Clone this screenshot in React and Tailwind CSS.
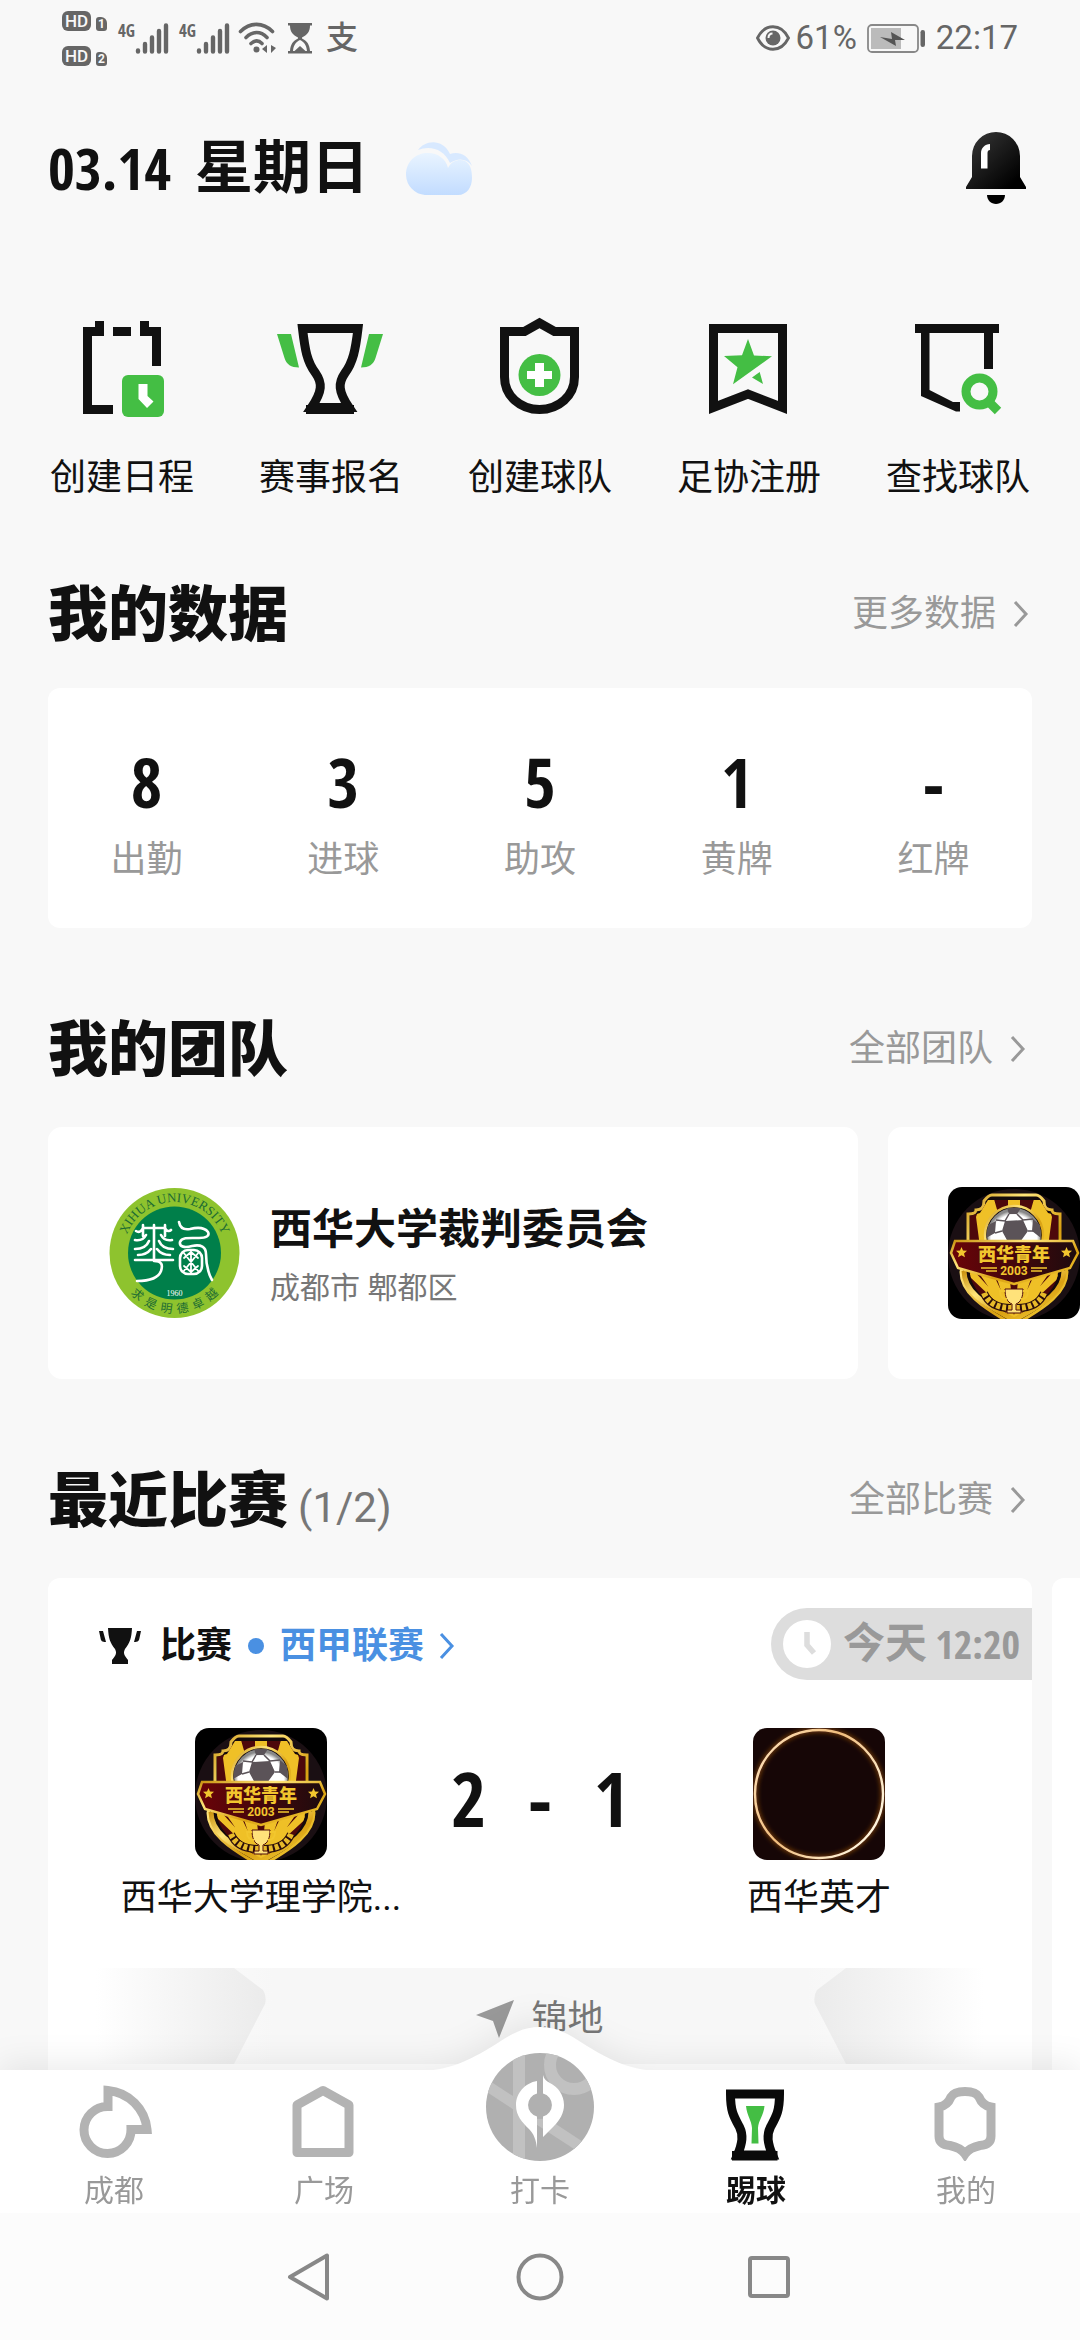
import React from "react";
import { useState } from "react";

const Chevron = ({ className }) => (
  <svg viewBox="0 0 16 28" className={className} fill="none" stroke="currentColor" strokeWidth="3">
    <path d="M2 2l11 12L2 26" />
  </svg>
);

const Signal = () => (
  <span className="flex h-[31px]">
    <span className="w-[17px] text-[17px] leading-4 font-bold num">4G</span>
    <svg viewBox="0 0 34 31" className="h-[31px] w-[34px]" stroke="currentColor" strokeWidth="4.4" strokeLinecap="round">
      <path d="M3 27.5v1M10 21v7.500M17 14.500v14M24 8v20.500M31 2.500v26" />
    </svg>
  </span>
);

const HdTag = ({ n }) => (
  <span className="flex items-end justify-between w-[45px] h-[20px]">
    <span className="flex items-center justify-center w-[29px] h-[20px] rounded-[6px] bg-[#666] text-[#f8f8f8] text-[17px] leading-5 font-medium">HD</span>
    <span className="flex items-center justify-center w-[11px] h-[14px] rounded-[3px] rounded-tr-[6px] bg-[#666] text-[#f8f8f8] text-[12px] leading-[14px] font-bold">{n}</span>
  </span>
);

function StatusBar() {
  return (
    <div className="flex items-center justify-between h-[76px] px-[62px] text-[#666]">
      <div className="flex items-center">
        <div className="flex flex-col justify-between h-[55px] mr-[11px]">
          <HdTag n="1" />
          <HdTag n="2" />
        </div>
        <div className="flex gap-[10px] mr-2">
          <Signal />
          <Signal />
        </div>
        <svg viewBox="0 0 38 32" className="w-[38px] h-8 mr-3" fill="none" stroke="currentColor" strokeWidth="3.6" strokeLinecap="round">
          <path d="M2.500 9.500C12 0 25 0 34.500 9.500M8 15.500c7-6.500 14.500-6.500 21 0M13 21.500c4-3.500 7.500-3.500 11 0" />
          <circle cx="18.500" cy="27.500" r="3" fill="currentColor" stroke="none" />
          <path d="M29 23v8l-5-4zM33 23v8l5-5z" fill="currentColor" stroke="none" />
        </svg>
        <svg viewBox="0 0 24 32" className="w-6 h-8 mr-[14px]" fill="currentColor">
          <path d="M0 1h24v2.500H22C22 10 19 13 14 15.500v1C19 19 21.500 22 22 29h2v2.500H0V29h2c.500-7 3-10 8-12.500v-1C5 13 2 10 2 3.500H0zM12 18c-4 2-6.500 5-7 11h1.500L12 24l5.500 5H19c-.500-6-3-9-7-11z" fillRule="evenodd" />
        </svg>
        <span className="text-[32px] leading-8 font-medium">支</span>
      </div>
      <div className="flex items-center text-[33px] leading-10">
        <svg viewBox="0 0 34 26" className="w-[34px] h-[26px] mr-[6px]" fill="none" stroke="currentColor" strokeWidth="2.800">
          <path d="M1.500 13C9-2 25-2 32.500 13 25 28 9 28 1.500 13z" />
          <circle cx="17" cy="13" r="7.500" fill="currentColor" stroke="none" />
          <path d="M12.500 13c0-3 1.500-4.500 4-4.500" stroke="#f8f8f8" strokeWidth="2" />
        </svg>
        <span>61%</span>
        <svg viewBox="0 0 59 29" className="w-[59px] h-[29px] mx-[10px]">
          <rect x="1" y="1" width="50" height="27" rx="4" fill="none" stroke="#888" strokeWidth="1.800" />
          <rect x="4" y="4" width="30" height="21" fill="#bbb" />
          <path d="M13 13l12 2-1-7 14 8-10 0 1 6z" fill="#555" />
          <rect x="53.500" y="6" width="4.500" height="17" rx="2.200" fill="#666" />
        </svg>
        <span>22:17</span>
      </div>
    </div>
  );
}

const actions = [
  {
    label: "创建日程",
    icon: (
      <>
        <path d="M15 11h12V5h9v15H24v69h21v9H15zM45 11h18v9H45zM72 5h9v6h12v39h-9V20H72z" fill="#111" />
        <rect x="54" y="59" width="42" height="42" rx="6" fill="#44be44" />
        <path d="M70.500 68h9v12l6 5.500-6.500 6.500-8.500-9z" fill="#fff" />
      </>
    ),
  },
  {
    label: "赛事报名",
    icon: (
      <>
        <path d="M25.500 12.500h55.500C78.500 34 76 46 68 57c-7 10-7 18 4 34.500H34.500c11-16.500 11-24.500 4-34.500C30 46 28 34 25.500 12.500z" fill="none" stroke="#111" strokeWidth="9" />
        <path d="M29 89h48v9H29z" fill="#111" />
        <path d="M0 18h14l8 33.500c-8 0-12.500-3-14.500-9.500zM106 18H92l-8 33.500c8 0 12.500-3 14.500-9.500z" fill="#44be44" />
      </>
    ),
  },
  {
    label: "创建球队",
    icon: (
      <>
        <path d="M18.500 15.500h20L53.500 7l15 8.500h20V61c0 19-16 32.500-35 32.500S18.500 80 18.500 61z" fill="none" stroke="#111" strokeWidth="9" />
        <circle cx="53.500" cy="59" r="21" fill="#44be44" />
        <path d="M49 47h9v8h8v8h-8v8h-9v-8h-8v-8h8z" fill="#fff" />
      </>
    ),
  },
  {
    label: "足协注册",
    icon: (
      <>
        <path d="M18.500 12.500h69v79L53 78 18.500 91.500z" fill="none" stroke="#111" strokeWidth="9" />
        <path d="M53 23l6 16.500 18 .800-39 28 4.500-17L29 40l18-.700zM64.700 56L68 68l-11-6.500z" fill="#44be44" />
      </>
    ),
  },
  {
    label: "查找球队",
    icon: (
      <>
        <path d="M11 8h84v9h-6v36h-9V17H25.500v57L49 86h7v9.500h-4L17 80V17h-6z" fill="#111" />
        <circle cx="75.500" cy="75.500" r="13.500" fill="none" stroke="#44be44" strokeWidth="9" />
        <path d="M84 85l10 10" stroke="#44be44" strokeWidth="9" />
      </>
    ),
  },
];

const stats = [
  { label: "出勤", value: "8" },
  { label: "进球", value: "3" },
  { label: "助攻", value: "5" },
  { label: "黄牌", value: "1" },
  { label: "红牌", value: "-" },
];

function SectionHead({ title, count, more, className }) {
  return (
    <div className={`flex items-center justify-between h-[72px] ${className}`}>
      <h2 className="flex items-baseline pt-1 text-[60px] leading-[72px] font-black">
        {title}
        {count && <span className="ml-[10px] text-[42px] leading-none font-normal text-[#777]">{count}</span>}
      </h2>
      <a href="#" className="flex items-center pr-[6px] text-[36px] leading-[44px] text-[#999]">
        {more}
        <Chevron className="w-4 h-7 ml-[17px]" />
      </a>
    </div>
  );
}

function XihuaSeal() {
  return (
    <svg viewBox="0 0 132 132" className="w-[132px] h-[132px] shrink-0">
      <defs>
        <path id="seal-top" d="M15.500 66a51 51 0 0 1 102 0" />
        <path id="seal-bottom" d="M6.500 66a60 60 0 0 0 120 0" />
      </defs>
      <circle cx="66.500" cy="66" r="65" fill="#8ec32e" />
      <circle cx="66.500" cy="66" r="46.500" fill="#007f4a" />
      <text fill="#1c6b33" fontSize="13" fontFamily="Liberation Serif, serif" textAnchor="middle">
        <textPath href="#seal-top" startOffset="50%">XIHUA UNIVERSITY</textPath>
      </text>
      <text fill="#1c6b33" fontSize="12" fontFamily="Noto Sans CJK SC, sans-serif" textAnchor="middle">
        <textPath href="#seal-bottom" startOffset="50%">{"求\u00a0\u00a0是\u00a0\u00a0明\u00a0\u00a0德\u00a0\u00a0卓\u00a0\u00a0越"}</textPath>
      </text>
      <text x="66.500" y="109" fill="#fff" fontSize="8" fontFamily="Liberation Serif, serif" textAnchor="middle">1960</text>
      <g fill="none" stroke="#fff" strokeWidth="2.600" strokeLinecap="round" strokeLinejoin="round">
        <path d="M28 44c3 2 6 0 7-3h22c1 3 4 4 6 2M35 38v11M57 38v11M46 38v36M27 53c6 1 9-1 11-5M64 53c-6 1-9-1-11-5M27 62c7 0 12-3 14-8M65 62c-7 0-12-3-14-8M27 73h38M30 68c6 0 10-2 13-6M62 68c-6 0-10-2-13-6M46 74c8 0 9 4 7 10-3 8-12 10-24 10" />
        <path d="M71 35c1 6 5 8 11 7 8-2 15-1 18 3 2 4-2 6-9 6-9 0-17-1-19 4-1 5 5 6 12 4 9-2 14 1 14 8 0 9 1 17 6 26" />
        <rect x="72" y="63" width="22" height="24" rx="8" />
        <path d="M75 65l16 20M91 65L75 85M83 63v24M76 71l7-6 7 6M76 79l7 6 7-6" strokeWidth="1.800" />
      </g>
    </svg>
  );
}

function YouthCrest() {
  return (
    <svg viewBox="0 0 132 132" className="w-[132px] h-[132px] shrink-0 rounded-[14px]">
      <defs>
        <linearGradient id="crest-gold" x1="0" y1="0" x2="1" y2="1">
          <stop offset="0" stopColor="#c9920f" />
          <stop offset=".3" stopColor="#ffe57a" />
          <stop offset=".6" stopColor="#d9a012" />
          <stop offset="1" stopColor="#f7d23c" />
        </linearGradient>
        <linearGradient id="crest-red">
          <stop offset="0" stopColor="#6b0308" />
          <stop offset="1" stopColor="#1d0b0e" />
        </linearGradient>
        <radialGradient id="crest-ball" cx=".5" cy=".55">
          <stop offset="0" stopColor="#999" />
          <stop offset=".3" stopColor="#fff" />
          <stop offset=".85" stopColor="#fff" />
          <stop offset="1" stopColor="#888" />
        </radialGradient>
        <clipPath id="crest-inner">
          <path d="M40 13h52l8 13 10 3v55c0 16-14 31-44 48-30-17-44-32-44-48V29l10-3z" />
        </clipPath>
      </defs>
      <rect width="132" height="132" fill="#000" />
      <circle cx="66" cy="68" r="66" fill="#1a0f13" />
      <path d="M44 8h44c3 0 5 2 8 6 0 7 3 9 8 9 0 3 2 4 8 4v30l7 28c0 20-20 35-53 53C33 120 13 105 13 85l7-28V27c6 0 8-1 8-4 5 0 8-2 8-9 3-4 5-6 8-6z" fill="#140a0b" stroke="url(#crest-gold)" strokeWidth="3" />
      <g clipPath="url(#crest-inner)">
        <rect width="132" height="132" fill="#4d080b" />
        <path d="M34 12h12l4 14-12 34h-6L28 30zM60 5h12v20H60zM86 12h12l6 18-4 30h-6L82 26z" fill="#efc027" />
        <path d="M18 84l48 46-42-46zM34 88l32 46-22-46zM50 90l15 44-5-44zM72 90l-5 44 15-44zM88 88l-22 46 32-46zM108 84l-42 46 50-46z" fill="#efc027" stroke="#efc027" strokeWidth="3" />
      </g>
      <path d="M16 84c0 20 18 32 50 49 32-17 50-29 50-49" fill="none" stroke="url(#crest-gold)" strokeWidth="5" />
      <circle cx="66" cy="48" r="29" fill="#14080a" stroke="url(#crest-gold)" strokeWidth="2.500" />
      <circle cx="66" cy="48" r="27" fill="url(#crest-ball)" />
      <path d="M57 34l18-1 5 11-8 11H60l-6-11zM59 21h14l-4 6h-8zM40 38l8-4-1 12-9 5zM92 38l-7-6-1 12 9 7z" fill="#5b5358" />
      <path d="M61 27l-4 7-9-1M69 27l6 6 10-1M54 44l-7 2M80 44l5 0" stroke="#5b5358" strokeWidth="1.500" fill="none" />
      <path d="M7 54h118l5 12-8 15-56 16L10 81 3 66z" fill="url(#crest-red)" stroke="url(#crest-gold)" strokeWidth="2.500" />
      <text x="66" y="74" fill="#f2c62e" fontSize="18" fontWeight="900" fontFamily="Noto Sans CJK SC, sans-serif" textAnchor="middle">西华青年</text>
      <text x="66" y="88" fill="#f2c62e" fontSize="12" fontWeight="700" fontFamily="Roboto, sans-serif" textAnchor="middle">2003</text>
      <path d="M13.500 60l1.500 3.500 4 .300-3 2.600 1 3.900-3.500-2.100-3.500 2.100 1-3.900-3-2.600 4-.300zM118.500 60l1.500 3.500 4 .300-3 2.600 1 3.900-3.500-2.100-3.500 2.100 1-3.900-3-2.600 4-.300z" fill="#f2c62e" />
      <path d="M33 81h16M38 84h11M99 81H83M94 84H83" stroke="#f2c62e" strokeWidth="1.600" />
      <path d="M36 106c4 10 14 15 27 15M96 106c-4 10-14 15-27 15" fill="none" stroke="#2a0d0b" strokeWidth="8" />
      <path d="M36 106c4 10 14 15 27 15M96 106c-4 10-14 15-27 15" fill="none" stroke="#e8ba2a" strokeWidth="6" strokeDasharray="4 2" />
      <path d="M57 102h18c0 8-2 13-7 15v6h5v3H59v-3h5v-6c-5-2-7-7-7-15z" fill="#ffe27a" stroke="#4d080b" strokeWidth="1" />
      <path d="M57 104h-5c0 5 2 8 7 8M75 104h5c0 5-2 8-7 8" fill="none" stroke="#f2c62e" strokeWidth="1.800" />
    </svg>
  );
}

function EclipseLogo() {
  return (
    <svg viewBox="0 0 132 132" className="w-[132px] h-[132px] shrink-0 rounded-[14px]">
      <defs>
        <linearGradient id="ring" x1="0" y1="0" x2="1" y2=".6">
          <stop offset="0" stopColor="#ffe6c4" />
          <stop offset=".5" stopColor="#f0bd7c" />
          <stop offset="1" stopColor="#fff4dc" />
        </linearGradient>
        <filter id="glow">
          <feGaussianBlur stdDeviation="2.500" />
        </filter>
      </defs>
      <rect width="132" height="132" fill="#160606" />
      <circle cx="66" cy="66" r="64" fill="none" stroke="#a55a12" strokeWidth="3" filter="url(#glow)" />
      <circle cx="66" cy="66" r="64" fill="none" stroke="url(#ring)" strokeWidth="2.400" />
    </svg>
  );
}

function MatchCard() {
  return (
    <article className="w-full shrink-0 overflow-hidden rounded-[12px] bg-white pt-[30px] pb-[120px]">
      <div className="flex items-center justify-between pl-[50px] text-[36px] leading-[44px] font-bold">
        <div className="flex items-center pt-1">
          <svg viewBox="0 0 44 38" className="w-11 h-[38px] mr-[18px]" fill="#111">
            <path d="M10 1h24c-.500 10-2 15-7 21-2 4-1 6 3 11v4H14v-4c4-5 5-7 3-11C12 16 10.500 11 10 1zM1 4h4l3 11c-4 0-5-1-5.500-4zM43 4h-4l-3 11c4 0 5-1 5.500-4z" />
          </svg>
          <span>比赛</span>
          <i className="w-4 h-4 mx-4 rounded-full bg-[#4a90e2]" />
          <a href="#" className="flex items-center text-[#4a90e2]">
            西甲联赛
            <Chevron className="w-4 h-7 ml-[15px]" />
          </a>
        </div>
        <div className="flex items-center h-[72px] pl-3 pr-3 rounded-l-full bg-[#ddd] text-[#999] text-[42px]">
          <svg viewBox="0 0 48 48" className="w-12 h-12 mr-3">
            <circle cx="24" cy="24" r="24" fill="#fff" />
            <path d="M24 12v13l7 8" fill="none" stroke="#ddd" strokeWidth="5.500" />
          </svg>
          <span className="mr-2">今天</span>
          <time className="text-[40px] num">12:20</time>
        </div>
      </div>

      <div className="grid grid-cols-[17fr_14fr_17fr] px-[60px] mt-12 text-center">
        <div className="flex flex-col items-center">
          <YouthCrest />
          <span className="mt-4 text-[36px] leading-[44px] whitespace-nowrap">西华大学理学院...</span>
        </div>
        <div className="flex items-center justify-between h-[132px] px-[37px] pt-2 text-[76px] leading-none num">
          <span>2</span>
          <span>-</span>
          <span>1</span>
        </div>
        <div className="flex flex-col items-center">
          <EclipseLogo />
          <span className="mt-4 text-[36px] leading-[44px]">西华英才</span>
        </div>
      </div>

      <div className="flex justify-between mx-12 mt-12 h-24 bg-linear-[90deg,#fff,#f7f7f7_20%,#f7f7f7_80%,#fff]">
        <svg viewBox="0 0 170 96" className="w-[170px] h-24">
          <defs>
            <linearGradient id="fade-l">
              <stop offset="0" stopColor="#fff" />
              <stop offset="1" stopColor="#ebebeb" />
            </linearGradient>
          </defs>
          <path d="M0 0h138l29 22q4 6 2 14L138 96H0z" fill="url(#fade-l)" />
        </svg>
        <div className="flex items-center pt-[6px] text-[36px] leading-[44px] text-[#777]">
          <svg viewBox="0 0 38 38" className="w-[38px] h-[38px] mr-[17px]" fill="#999">
            <path d="M38 0L23 38l-6-17L0 15z" />
          </svg>
          锦地
        </div>
        <svg viewBox="0 0 170 96" className="w-[170px] h-24 -scale-x-100">
          <path d="M0 0h138l29 22q4 6 2 14L138 96H0z" fill="url(#fade-l)" />
        </svg>
      </div>
    </article>
  );
}

const tabs = [
  {
    label: "成都",
    icon: <path d="M32 5.500A43 43 0 0 1 71 44.500H55A23.500 23.500 0 1 1 32 21.500z" fill="none" stroke="#b3b3b3" strokeWidth="9" />,
  },
  {
    label: "广场",
    icon: <path d="M11 20L37 5.500 63 20v47.500H11z" fill="none" stroke="#b3b3b3" strokeWidth="9" strokeLinejoin="round" />,
  },
  { label: "打卡" },
  {
    label: "踢球",
    icon: (
      <>
        <path d="M12.500 9h49c0 17-3 22-9 33-4 8-3 16 2 28h-35c5-12 6-20 2-28-6-11-9-16-9-33z" fill="none" stroke="#0a0a0a" strokeWidth="9" />
        <path d="M14 66h45.500v9.500H14z" fill="#0a0a0a" />
        <path d="M28 21h18.500c-1 10-6 14-6.500 22l.500 15.500h-7l.500-15.500c-.500-8-5-12-6-22z" fill="#44be44" />
      </>
    ),
  },
  {
    label: "我的",
    icon: (
      <path
        d="M37 6.500c-7 0-12 2-14 5.500-2 5-6 9-12 10v29c0 7 5 9 11 9.500 7 1.500 12 4 15 8.500 3-4.500 8-7 15-8.500 6-.500 11-2.500 11-9.500V22c-6-1-10-5-12-10-2-3.500-7-5.500-14-5.500z"
        fill="none"
        stroke="#b3b3b3"
        strokeWidth="9"
      />
    ),
  },
];

const CheckInIcon = () => (
  <svg viewBox="0 0 108 108" className="w-[108px] h-[108px] -mt-8">
    <defs>
      <clipPath id="disc">
        <circle cx="54" cy="54" r="54" />
      </clipPath>
    </defs>
    <g clipPath="url(#disc)">
      <rect width="108" height="108" fill="#b0b0b0" />
      <g fill="none" stroke="#c1c1c1">
        <path d="M33 0v108" strokeWidth="12" />
        <circle cx="88" cy="12" r="24" strokeWidth="12" />
        <path d="M0 32l98 64" strokeWidth="11" />
      </g>
    </g>
    <circle cx="54" cy="52" r="14" fill="#b0b0b0" />
    <path d="M51 28C39 30 30 40 30 52c0 11 6 17 13 24 5 5 7 11 8 19V63.600A12 12 0 0 1 51 40.400zM57 22c1 4 3 6 7 8 8 4 14 12 14 22 0 8-4 15-10 21L57 84V63.600A12 12 0 0 0 57 40.400z" fill="#fff" />
  </svg>
);

export default function App() {
  const [active, setActive] = useState("踢球");

  return (
    <div className="min-h-screen overflow-x-hidden bg-[#f8f8f8] text-[#111] font-[Roboto,'Noto_Sans_CJK_SC',sans-serif] [&_.num]:font-['Open_Sans_Condensed','Noto_Sans_CJK_SC',sans-serif] [&_.num]:font-bold">
      <StatusBar />

      <header className="flex items-center justify-between h-[184px] px-12 pr-[54px]">
        <h1 className="flex items-center text-[58px] leading-[72px] font-bold">
          <span className="num">03.14</span>
          <span className="ml-6">星期日</span>
          <svg viewBox="0 0 66 54" className="w-[66px] h-[54px] ml-[37px]">
            <defs>
              <linearGradient id="cloud" x2="0" y2="1">
                <stop offset="0" stopColor="#e9f4ff" />
                <stop offset="1" stopColor="#c2dcff" />
              </linearGradient>
            </defs>
            <path d="M12 9C18 0 36-4 44 13c8-3 18 0 22 12-6-8-14-8-22-3C38 8 24 4 12 9z" fill="#d8e9ff" />
            <path d="M19 54A20 21 0 0 1 0 34C0 20 10 12 22 12c10 0 18 6 20 15 4-8 12-9 17-7 5 3 7 8 7 17 0 9-5 17-14 17z" fill="url(#cloud)" />
          </svg>
        </h1>
        <button type="button" aria-label="通知">
          <svg viewBox="0 0 60 72" className="w-[60px] h-[72px]">
            <defs>
              <linearGradient id="bell" x1="0" y1="0" x2="1" y2="1">
                <stop offset="0" stopColor="#3a3a3a" />
                <stop offset=".85" stopColor="#000" />
              </linearGradient>
            </defs>
            <path d="M6 24a24 24 0 0 1 48 0v21l6 10v2H0v-2l6-10z" fill="url(#bell)" />
            <path d="M21 63h18c0 5-4 9-9 9s-9-4-9-9z" fill="#000" />
            <path d="M15 36.500V21c0-5 4-9 9-9v6q-2.500 0-2.500 3v15.500z" fill="#fff" />
          </svg>
        </button>
      </header>

      <nav className="flex justify-between px-[50px] pt-14">
        {actions.map((a) => (
          <a key={a.label} href="#" className="flex flex-col items-center w-36">
            <svg viewBox="0 0 108 108" className="w-[108px] h-[108px]">
              {a.icon}
            </svg>
            <span className="mt-8 text-[36px] leading-[44px]">{a.label}</span>
          </a>
        ))}
      </nav>

      <section className="px-12 mt-[78px]">
        <SectionHead title="我的数据" more="更多数据" className="mb-[38px] -mr-[3px]" />
        <dl className="grid grid-cols-5 h-60 pt-[58px] rounded-[12px] bg-white text-center">
          {stats.map((s) => (
            <div key={s.label} className="flex flex-col-reverse justify-end">
              <dt className="mt-5 text-[36px] leading-[44px] text-[#999]">{s.label}</dt>
              <dd className="text-[68px] leading-[72px] num">{s.value}</dd>
            </div>
          ))}
        </dl>
      </section>

      <section className="px-12 mt-[85px]">
        <SectionHead title="我的团队" more="全部团队" className="mb-[42px]" />
        <div className="flex gap-[30px]">
          <a href="#" className="flex items-center w-[75vw] shrink-0 p-[60px] rounded-[14px] bg-white">
            <XihuaSeal />
            <div className="ml-[30px] pt-1">
              <h3 className="text-[42px] leading-[52px] font-bold">西华大学裁判委员会</h3>
              <p className="mt-[14px] text-[30px] leading-9 text-[#777]">成都市 郫都区</p>
            </div>
          </a>
          <a href="#" className="flex items-center w-[75vw] shrink-0 p-[60px] rounded-[14px] bg-white">
            <YouthCrest />
          </a>
        </div>
      </section>

      <section className="px-12 mt-[85px]">
        <SectionHead title="最近比赛" count="(1/2)" more="全部比赛" className="mb-[42px]" />
        <div className="flex gap-5">
          <MatchCard />
          <article className="w-full shrink-0 rounded-[12px] bg-white" />
        </div>
      </section>

      <footer className="fixed inset-x-0 bottom-0 drop-shadow-[0_-6px_16px_rgba(0,0,0,0.08)]">
        <div className="relative bg-white">
          <svg viewBox="0 0 244 44" className="absolute bottom-full left-1/2 w-[244px] h-11 -translate-x-1/2 -mb-px" fill="#fff">
            <path d="M0 44C30 44 50 34 75 19 95 6 105 0 122 0s27 6 47 19c25 15 45 25 75 25z" />
          </svg>
          <div className="relative grid grid-cols-[17fr_18fr_18fr_18fr_17fr] px-3 pt-[15px] pb-1">
            {tabs.map((t) => (
              <button key={t.label} type="button" onClick={() => setActive(t.label)} className="flex flex-col items-center">
                {t.icon ? (
                  <svg viewBox="0 0 76 76" className="w-[76px] h-[76px]">
                    {t.icon}
                  </svg>
                ) : (
                  <CheckInIcon />
                )}
                <span className={`mt-3 text-[30px] leading-9 ${active === t.label ? "font-bold text-[#111]" : "text-[#999]"}`}>{t.label}</span>
              </button>
            ))}
          </div>
        </div>
        <div className="flex items-center justify-center gap-[182px] h-[127px] bg-[#fcfcfc]">
          <button type="button" aria-label="返回">
            <svg viewBox="0 0 48 48" className="w-12 h-12" fill="none" stroke="#888" strokeWidth="4" strokeLinejoin="round">
              <path d="M41 2.500v43L4 24z" />
            </svg>
          </button>
          <button type="button" aria-label="主页">
            <svg viewBox="0 0 48 48" className="w-12 h-12" fill="none" stroke="#888" strokeWidth="4">
              <circle cx="24" cy="24" r="21.500" />
            </svg>
          </button>
          <button type="button" aria-label="最近任务">
            <svg viewBox="0 0 48 48" className="w-12 h-12" fill="none" stroke="#888" strokeWidth="4">
              <rect x="4" y="5" width="38" height="38" rx="2" />
            </svg>
          </button>
        </div>
      </footer>
    </div>
  );
}
